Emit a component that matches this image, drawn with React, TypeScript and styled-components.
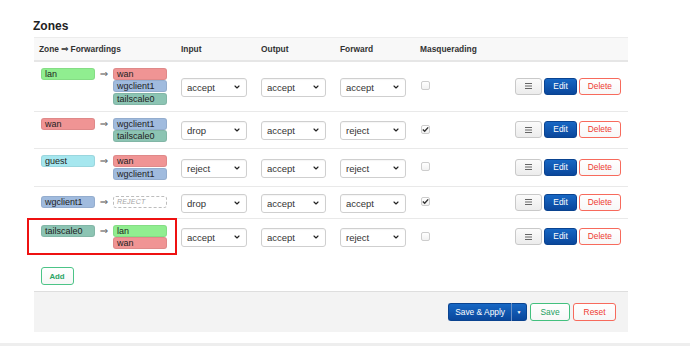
import styled, { createGlobalStyle } from "styled-components";
import { ChevronDown } from "lucide-react";

const GlobalStyle = createGlobalStyle`
    body {
        margin: 0;
        background: #fff;
        font-family: "Liberation Sans", Arial, sans-serif;
        color: #333;
    }
`;

const Page = styled.div`
    width: 690px;
    height: 351px;
    overflow: hidden;
    display: flex;
    flex-direction: column;
`;

const Section = styled.div`
    width: 594px;
    margin-left: 34px;
    padding-top: 19px;
    display: flex;
    flex-direction: column;
`;

const Title = styled.h3`
    margin: 0 0 3.5px -1px;
    font-size: 12px;
    line-height: 14px;
    font-weight: bold;
    color: #222;
`;

const COLUMNS = "140px 80px 79px 80px 1fr auto";

// 표 헤더
const HeadRow = styled.div`
    display: grid;
    grid-template-columns: ${COLUMNS};
    align-items: center;
    height: 22px;
    background: #f8f8f8;
    border-top: 1px solid #ececec;
    border-bottom: 2px solid #e6e6e6;
    font-size: 8.4px;
    font-weight: bold;
    color: #333;
`;

const HeadArrow = styled.span`
    font-family: "DejaVu Sans", sans-serif;
    font-size: 9px;
    margin: 0 2px;
`;

const Row = styled.div<{ $last?: boolean }>`
    display: grid;
    grid-template-columns: ${COLUMNS};
    align-items: center;
    padding: 6px 0;
    border-bottom: 1px solid ${(p) => (p.$last ? "transparent" : "#e9e9e9")};
`;

const Cell = styled.div`
    padding: 0 7px;
    display: flex;
    align-items: center;
`;

const HeadCell = styled(Cell)<{ $first?: boolean }>`
    padding-left: ${(p) => (p.$first ? "5px" : "7px")};
    white-space: nowrap;
`;

const ZoneCell = styled(Cell)`
    position: relative;
    align-items: flex-start;
`;

const ActionCell = styled(Cell)`
    justify-content: flex-end;
    gap: 2px;
`;

// 존 배지
const Badge = styled.div<{ $color: string }>`
    width: 54px;
    height: 12px;
    box-sizing: border-box;
    background: ${(p) => p.$color};
    border: 1px solid rgba(0, 0, 0, 0.07);
    border-radius: 3px;
    padding-left: 3px;
    font-size: 9px;
    line-height: 10px;
    color: #222;
    white-space: nowrap;
`;

const Placeholder = styled.div`
    width: 54px;
    height: 12.5px;
    box-sizing: border-box;
    border: 1px dashed #bdbdbd;
    border-radius: 3px;
    padding-left: 3px;
    font-size: 7px;
    line-height: 10.5px;
    font-style: italic;
    color: #a5a5a5;
    letter-spacing: 0.2px;
`;

const Arrow = styled.span`
    width: 18px;
    text-align: center;
    font-family: "DejaVu Sans", sans-serif;
    font-size: 10px;
    line-height: 11px;
    color: #555;
`;

const FwdList = styled.div`
    display: flex;
    flex-direction: column;
    gap: 0.5px;
`;

// 강조 박스
const Highlight = styled.div`
    position: absolute;
    top: -7px;
    bottom: -6px;
    left: -7px;
    right: -3px;
    border: 2px solid #ee1111;
    pointer-events: none;
`;

const SelectWrap = styled.div`
    position: relative;
    width: 67px;
    height: 19px;
`;

const Select = styled.select`
    appearance: none;
    width: 100%;
    height: 100%;
    box-sizing: border-box;
    border: 1px solid #cfcfcf;
    border-radius: 3px;
    background: #fff;
    padding: 0 0 0 5px;
    font-family: "Liberation Sans", Arial, sans-serif;
    font-size: 9.5px;
    color: #333;
    box-shadow: inset 0 1px 1px rgba(0, 0, 0, 0.04);
`;

const Chevron = styled(ChevronDown)`
    position: absolute;
    right: 6px;
    top: 6px;
    pointer-events: none;
`;

const CheckBox = styled.span`
    width: 9px;
    height: 9px;
    box-sizing: border-box;
    border: 1px solid #cdcdcd;
    border-radius: 2px;
    background: linear-gradient(#fff, #f2f2f2);
    display: flex;
    align-items: center;
    justify-content: center;
    margin-left: 0.5px;
    margin-top: -1px;
`;

type Kind = "neutral" | "primary" | "negative" | "positive";

const palette: Record<Kind, { bg: string; border: string; color: string }> = {
    neutral: { bg: "linear-gradient(#fbfbfb, #ececec)", border: "#c9c9c9", color: "#555" },
    primary: { bg: "linear-gradient(#1767c4, #0a479c)", border: "#0a4390", color: "#fff" },
    negative: { bg: "linear-gradient(#fff, #f7f7f7)", border: "#f76a5c", color: "#ee3b31" },
    positive: { bg: "linear-gradient(#fff, #f7f7f7)", border: "#43c07e", color: "#22a05e" },
};

const Button = styled.button<{ $kind: Kind }>`
    height: 17px;
    box-sizing: border-box;
    padding: 0 8px;
    border: 1px solid ${(p) => palette[p.$kind].border};
    border-radius: 3px;
    background: ${(p) => palette[p.$kind].bg};
    color: ${(p) => palette[p.$kind].color};
    font-family: "Liberation Sans", Arial, sans-serif;
    font-size: 8.4px;
    line-height: 15px;
    display: flex;
    align-items: center;
    justify-content: center;
    white-space: nowrap;
`;

const MenuButton = styled(Button)`
    padding: 0 9px;
`;

const AddButton = styled(Button)`
    height: 18px;
    width: 33px;
    padding: 0;
    margin: 11px 0 0 6.5px;
    font-weight: bold;
    font-size: 7.8px;
    border-color: #4cc487;
    color: #2aa565;
`;

// 하단 저장 영역
const Footer = styled.div`
    margin-top: 6px;
    height: 40px;
    border-top: 1px solid #dedede;
    background: #f3f3f3;
    display: flex;
    align-items: center;
    justify-content: flex-end;
    gap: 3px;
    padding-right: 12px;
`;

const FooterButton = styled(Button)`
    height: 18px;
    padding: 0 9.5px;
`;

const ApplyGroup = styled.div`
    display: flex;
`;

const ApplyMain = styled(FooterButton)`
    padding: 0 6px;
    border-radius: 3px 0 0 3px;
    border-right: none;
`;

const ApplyCaret = styled(FooterButton)`
    width: 16px;
    padding: 0;
    border-radius: 0 3px 3px 0;
    border-left: 1px solid #6b8fc4;
    font-size: 5px;
`;

const BottomRule = styled.div`
    margin-top: 11px;
    height: 3px;
    background: #eeeeee;
`;

const Menu = () => (
    <svg width="7" height="6" viewBox="0 0 7 6">
        <path d="M0 0.5H7M0 3H7M0 5.5H7" stroke="#666" strokeWidth="1" />
    </svg>
);

const Check = () => (
    <svg width="7" height="7" viewBox="0 0 7 7">
        <path d="M0.8 3.4L2.7 5.3L6.2 1.4" fill="none" stroke="#333" strokeWidth="1.4" />
    </svg>
);

const COLORS: Record<string, string> = {
    lan: "#90ee90",
    wan: "#f09494",
    guest: "#a6e7ef",
    wgclient1: "#a0bbde",
    tailscale0: "#8cc4b3",
};

type Zone = {
    name: string;
    fwd: string[];
    input: string;
    output: string;
    forward: string;
    masq: boolean;
};

const zones: Zone[] = [
    { name: "lan", fwd: ["wan", "wgclient1", "tailscale0"], input: "accept", output: "accept", forward: "accept", masq: false },
    { name: "wan", fwd: ["wgclient1", "tailscale0"], input: "drop", output: "accept", forward: "reject", masq: true },
    { name: "guest", fwd: ["wan", "wgclient1"], input: "reject", output: "accept", forward: "reject", masq: false },
    { name: "wgclient1", fwd: [], input: "drop", output: "accept", forward: "accept", masq: true },
    { name: "tailscale0", fwd: ["lan", "wan"], input: "accept", output: "accept", forward: "reject", masq: false },
];

const Policy = ({ value }: { value: string }) => (
    <SelectWrap>
        <Select defaultValue={value}>
            <option value="reject">reject</option>
            <option value="drop">drop</option>
            <option value="accept">accept</option>
        </Select>
        <Chevron size={8} strokeWidth={3.5} color="#222" />
    </SelectWrap>
);

const App = () => {
    return (
        <Page>
            <GlobalStyle />
            <Section>
                <Title>Zones</Title>
                <HeadRow>
                    <HeadCell $first>
                        Zone<HeadArrow>⇒</HeadArrow>Forwardings
                    </HeadCell>
                    <HeadCell>Input</HeadCell>
                    <HeadCell>Output</HeadCell>
                    <HeadCell>Forward</HeadCell>
                    <HeadCell>Masquerading</HeadCell>
                    <HeadCell />
                </HeadRow>
                {zones.map((z, i) => (
                    <Row key={z.name} $last={i === zones.length - 1}>
                        <ZoneCell>
                            <Badge $color={COLORS[z.name]}>{z.name}</Badge>
                            <Arrow>⇒</Arrow>
                            <FwdList>
                                {z.fwd.length === 0 ? (
                                    <Placeholder>REJECT</Placeholder>
                                ) : (
                                    z.fwd.map((f) => (
                                        <Badge key={f} $color={COLORS[f]}>
                                            {f}
                                        </Badge>
                                    ))
                                )}
                            </FwdList>
                            {z.name === "tailscale0" && <Highlight />}
                        </ZoneCell>
                        <Cell>
                            <Policy value={z.input} />
                        </Cell>
                        <Cell>
                            <Policy value={z.output} />
                        </Cell>
                        <Cell>
                            <Policy value={z.forward} />
                        </Cell>
                        <Cell>
                            <CheckBox>{z.masq && <Check />}</CheckBox>
                        </Cell>
                        <ActionCell>
                            <MenuButton $kind="neutral">
                                <Menu />
                            </MenuButton>
                            <Button $kind="primary">Edit</Button>
                            <Button $kind="negative">Delete</Button>
                        </ActionCell>
                    </Row>
                ))}
                <AddButton $kind="positive">Add</AddButton>
                <Footer>
                    <ApplyGroup>
                        <ApplyMain $kind="primary">Save &amp; Apply</ApplyMain>
                        <ApplyCaret $kind="primary">▼</ApplyCaret>
                    </ApplyGroup>
                    <FooterButton $kind="positive">Save</FooterButton>
                    <FooterButton $kind="negative">Reset</FooterButton>
                </Footer>
            </Section>
            <BottomRule />
        </Page>
    );
};

export default App;
